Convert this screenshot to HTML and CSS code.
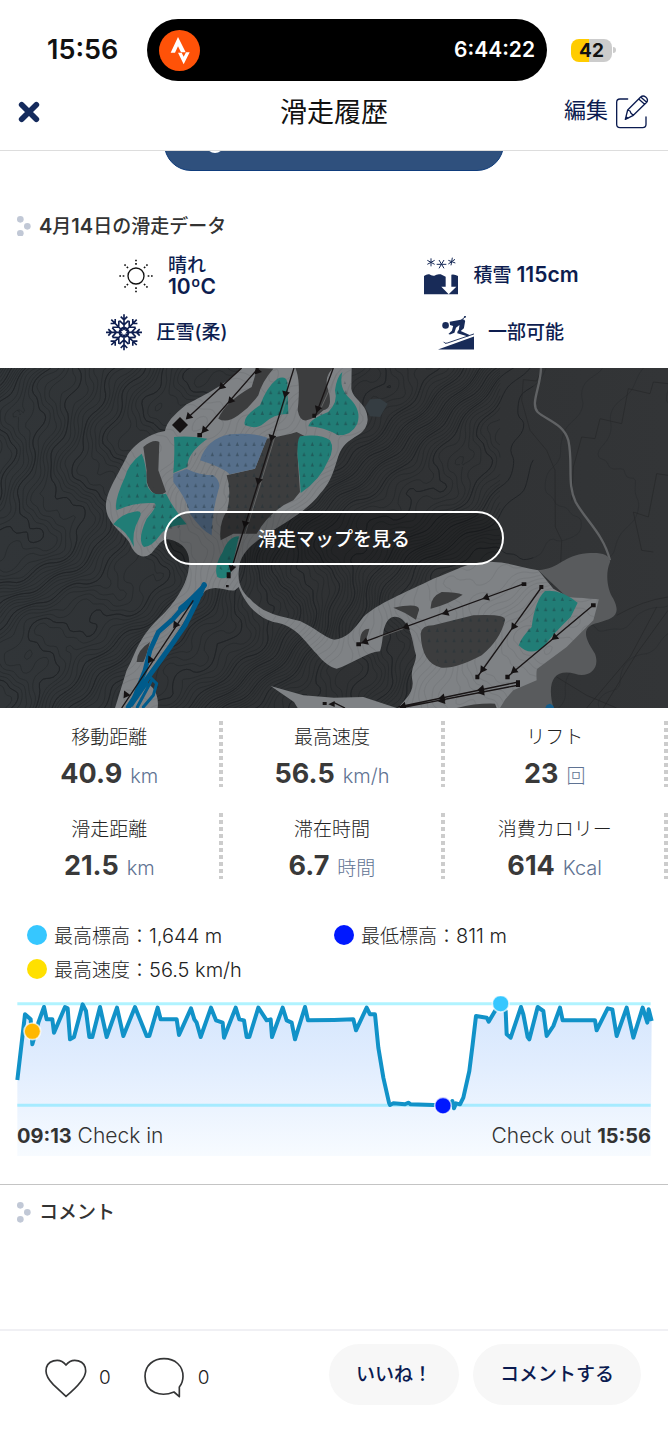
FILE: index.html
```html
<!DOCTYPE html>
<html lang="ja">
<head>
<meta charset="utf-8">
<meta name="viewport" content="width=device-width, initial-scale=1">
<title>滑走履歴</title>
<link rel="stylesheet" href="styles.css">
</head>
<body>
<div class="status">
  <span class="clock">15:56</span>
  <div class="island">
    <svg class="strava" viewBox="0 0 123 123"><circle cx="61.500" cy="61.500" r="61.500" fill="#ff5208"/><path d="M35 68 57 21 80 67H66L57 49 48 68Z" fill="#fff"/><path d="M57 68H68L74 80 81 67H92L74 103Z" fill="#fff"/></svg>
    <span class="timer">6:44:22</span>
  </div>
  <div class="battery"><span class="level">42</span><i class="nub"></i></div>
</div>
<header class="bar">
  <button class="plain close" aria-label="×"><svg viewBox="0 0 66 66"><path d="M11 11 55 55M55 11 11 55" stroke="#142a5c" stroke-width="17" stroke-linecap="round"/></svg></button>
  <h1>滑走履歴</h1>
  <button class="plain edit"><span>編集</span>
    <svg viewBox="840 280 108 108" fill="none" stroke="#0b1b50" stroke-width="4" stroke-linejoin="round" stroke-linecap="round"><path d="M881 295H858Q848 295 848 305V371Q848 381 858 381H926Q936 381 936 371V349"/><path d="M874 356 881 328 920 289Q927 283 935 289 944 297 938 305L898 344ZM881 328 888 331 891 338 898 344M914 295 932 311M920 289 938 305M876 348 882 353"/></svg>
  </button>
</header>
<main>
  <div class="peek"><button class="pill-top"><svg viewBox="0 0 12 12" aria-hidden="true"><circle cx="6" cy="6" r="6" fill="#fff"/></svg></button></div>

  <section class="data">
    <h2><svg class="dots" viewBox="0 0 42 62"><g fill="#c1c8d6"><circle cx="10" cy="10" r="10"/><circle cx="31" cy="31" r="10"/><circle cx="10" cy="52" r="10"/></g></svg><span><span class="latin">4</span>月<span class="latin">14</span>日の滑走データ</span></h2>
    <div class="conditions">
      <div class="condition">
        <svg viewBox="352 170 108 108" fill="none" stroke="#111" stroke-width="4"><circle cx="406" cy="224" r="24"/><g stroke-width="5" stroke-dasharray="5 5"><path d="M406 190V174M406 258V276M371 224H354M441 224H459M382 200 369 187M430 200 443 187M382 248 369 261M430 248 443 261"/></g></svg>
        <div class="lines"><span>晴れ</span><span class="latin">10ºC</span></div>
      </div>
      <div class="condition">
        <svg viewBox="264 158 108 114"><path d="M267 215Q276 208 283 210 289 215 298 214 306 208 317 210L332 217V247H319L341 270 364 247H349V211Q359 209 369 215V270H267Z" fill="#182b58"/><g stroke="#182b58" stroke-width="3"><path d="M288 162V186M277 168 299 180M299 168 277 180M312 167 327 192M327 167 312 192M305 180H334M352 160 348 183M340 168 361 176M360 165 340 179"/></g></svg>
        <span>積雪 <span class="latin">115cm</span></span>
      </div>
      <div class="condition">
        <svg viewBox="-55 -56 110 112" fill="none" stroke="#0d1d4f" stroke-width="5"><defs><path id="arm" d="M0-12V-55M-10-48 0-38 10-48M-14-36 0-23 14-36M-6-15 0-9 6-15"/></defs><use href="#arm"/><use href="#arm" transform="rotate(45)"/><use href="#arm" transform="rotate(90)"/><use href="#arm" transform="rotate(135)"/><use href="#arm" transform="rotate(180)"/><use href="#arm" transform="rotate(225)"/><use href="#arm" transform="rotate(270)"/><use href="#arm" transform="rotate(315)"/></svg>
        <span>圧雪(柔)</span>
      </div>
      <div class="condition">
        <svg viewBox="309 338 114 112"><g fill="#182b58"><circle cx="333" cy="371" r="10.500"/><path d="M346 359 381 353Q392 349 395 357L391 380 381 389 409 401 404 406 370 396Q369 390 375 385L377 370 366 378 361 394 347 400 342 398 353 388 357 373 347 370Z"/><path d="M309 447 423 406V447Z"/></g><path d="M381 356 397 342M327 423Q330 430 338 427L423 398" fill="none" stroke="#182b58" stroke-width="3"/><circle cx="394" cy="344" r="3" fill="#182b58"/></svg>
        <span>一部可能</span>
      </div>
    </div>
  </section>

  <section class="map">
    <svg class="terrain" viewBox="0 3 2004 1020" preserveAspectRatio="xMidYMid slice" aria-hidden="true">
      <defs>
        <pattern id="trees" width="25" height="31" patternUnits="userSpaceOnUse"><path d="M12 8 17 20H7Z" fill="#1b2e35" opacity=".4"/></pattern>
        <path id="tip" d="M-12-9H12L0 11Z"/>
        <linearGradient id="ground" x2="1"><stop offset="0" stop-color="#313538"/><stop offset=".5" stop-color="#2f3133"/><stop offset="1" stop-color="#333537"/></linearGradient>
      </defs>
      <path fill="url(#ground)" d="M0 0H2004V1023H0Z"/>
      <g id="contours" fill="none" stroke="#212427"></g>
      <path d="M1095 120 1110 97 1140 95 1163 110 1140 150 1110 148Z" fill="#353d42"/>
      <g fill="none" stroke="#252729" stroke-width="2"><path d="M1620 20 1610 42 1570 38 1565 100 1590 190 1640 250 1665 310 1666 480 1685 520 1682 590"/><path d="M2004 50 1960 45 1950 80 1885 65 1865 170 1800 155 1785 215 1745 210 1720 300 1715 400M2004 325 1970 320 1945 450 1900 435 1925 550 1960 555"/><path d="M1670 930 1760 985 1850 1023M1850 745Q1930 700 2004 690M1760 1023 1890 870 1970 720M1810 1023 1910 860 2004 730"/></g>
      <path d="M1623 3C1622 60 1590 110 1613 135 1640 160 1690 170 1705 220 1720 290 1700 350 1727 405 1757 460 1810 500 1830 580" fill="none" stroke="#606264" stroke-width="7"/>
      <path d="M1615 610C1680 605 1690 565 1760 559 1800 555 1832 562 1830 585 1815 620 1822 670 1840 695 1865 745 1840 755 1795 767 1735 780 1760 820 1785 860 1803 910 1760 935 1725 920 1665 905 1645 940 1655 1000L1660 1023H1490L1600 900 1780 750 1797 697 1700 690Z" fill="#595b5d"/>
      <path id="piste" fill="#7f8285" d="M725 3C670 60 600 90 560 112 520 145 500 165 495 192 440 200 390 245 380 270 345 340 315 380 318 425 325 480 385 505 392 535 405 565 430 580 455 558 475 535 485 515 505 517 545 525 575 550 566 605 560 660 510 725 475 755 410 820 405 865 380 910L345 1023H473C478 985 460 955 440 950L505 840 580 720 615 672C650 650 680 675 705 670L716 660C735 710 770 750 820 765 890 775 910 820 950 860 970 885 990 900 1010 905 1050 895 1100 855 1140 853 1148 830 1148 800 1152 785 1165 740 1190 745 1208 758 1235 780 1238 830 1248 865 1248 890 1230 905 1237 940 1245 980 1205 1005 1195 1023H1500L1515 998 1540 970 1610 940Q1608 910 1612 905L1700 840 1780 760 1797 697Q1750 693 1705 690L1660 665 1615 610C1560 600 1520 585 1480 585 1410 580 1370 610 1300 635 1220 675 1130 710 1090 750 1060 790 1040 815 1002 818 970 810 950 785 900 762 830 745 790 740 750 695 730 680 710 650 717 605 720 560 755 530 810 495 880 455 930 420 960 380 1000 340 1005 290 1020 255 1050 200 1095 215 1103 160 1105 110 1060 100 1054 65L1055 3Z"/>
      <path d="M812 957 910 985 1002 992 1090 990 1190 1023H893L882 1005Z" fill="#7f8285"/>
      <g id="slopelines" fill="none" stroke="#696c6f" stroke-width="2" opacity=".5"></g>
      <g fill="#3c3d3e">
        <path d="M772 3 755 60Q675 105 655 155 680 170 715 145 750 120 775 85 785 45 820 5Z"/>
        <path d="M886 3Q903 40 893 130 900 165 920 160 945 155 970 130 1000 125 985 70 970 30 1000 3Z"/>
        <path d="M430 240Q460 215 478 225L475 310 498 375Q470 395 452 370 435 350 440 310Z"/>
        <path d="M800 215Q860 205 890 195L915 208Q890 225 893 270L900 375 880 400Q810 430 770 500L700 500Q680 510 662 520 655 470 682 430 695 370 680 325L765 305Z"/>
        <path d="M1262 800Q1265 775 1300 775L1420 745Q1520 740 1515 760 1500 820 1445 865 1370 905 1325 902 1265 890 1262 800Z"/>
        <path d="M1180 722Q1270 705 1255 735L1248 758Q1215 735 1180 722ZM1292 725Q1290 690 1325 675 1370 675 1388 683 1350 710 1292 725ZM1080 825Q1080 785 1108 785 1105 800 1095 825ZM410 885Q410 850 450 825 440 865 430 885ZM1370 1023Q1430 1008 1485 1010L1490 1023Z"/>
      </g>
      <g fill="#217d76">
        <path d="M522 210Q565 205 622 215 560 260 562 300L520 318Q525 250 522 210Z"/>
        <path d="M425 260Q440 290 440 350 450 390 498 380 520 425 560 472 500 475 480 505 455 540 432 540 410 520 440 455 480 410 460 408 400 405 350 430 340 405 375 330 385 290 425 260Z"/>
        <path d="M400 435Q435 425 415 460 395 495 402 540 380 490 340 472 365 440 400 435Z"/>
        <path d="M832 35Q857 25 862 45L865 140Q820 140 790 170 770 188 735 175 725 150 780 115 800 60 832 35Z"/>
        <path d="M900 208Q965 200 990 220 1005 245 985 280 960 340 902 378 900 330 893 270 890 220 900 208Z"/>
        <path d="M1027 15Q1015 65 1050 95 1085 130 1072 170 1055 205 1015 205 970 180 925 178 930 155 985 135 1015 105 1005 70 1010 30 1027 15Z"/>
        <path d="M717 508Q685 508 668 555 640 600 652 630 670 640 690 625Z"/>
        <path d="M1635 672Q1680 665 1733 707L1712 750Q1660 800 1630 840 1590 870 1556 835 1565 810 1595 780 1605 700 1635 672Z"/>
      </g>
      <path d="M600 280Q620 215 690 202 750 195 802 212L765 305 690 322Q665 300 600 280ZM520 320 560 306Q600 325 640 325 665 345 655 370 635 440 635 505 605 490 570 440 560 395 520 345Z" fill="#566f8b"/>
      <g fill="url(#trees)"><path d="M522 210H622L562 300 522 310ZM425 260 440 350 498 380 560 472 480 505 432 540 460 408 350 420ZM832 35 862 45 865 140 735 175ZM600 280 690 202 802 212 765 305 690 322ZM802 215H900L890 380 770 490 662 510 690 322 765 305ZM900 208 990 220 985 280 902 378ZM520 320 560 306 640 325 655 370 635 505 570 440ZM1027 15 1050 95 1072 170 1015 205 925 178 1005 100ZM717 508 652 600 690 625ZM1635 672 1733 707 1630 840 1556 835ZM1262 800 1300 775 1420 745 1515 760 1445 865 1325 902Z"/></g>
      <g fill="none" stroke="#005b8b" stroke-linecap="round" stroke-linejoin="round"><path d="M612 653 590 705 555 775 510 840 445 930 385 1020" stroke-width="15"/><path d="M614 655 560 710 520 755 475 795 450 850 435 910 400 1000" stroke-width="14"/><path d="M600 680 545 725" stroke-width="20"/><path d="M450 930 470 950 460 985 430 1020M440 950 395 1015M455 940 412 1020" stroke-width="9"/></g>
      <path d="M1636 1023 1640 1014 1650 1010 1660 1016 1662 1023Z" fill="#145d8b"/>
      <g fill="none" stroke="#191516" stroke-width="4"><path d="M725 3 560 155M775 3 605 198M882 3 693 610M1000 3 947 145M580 700 365 1023M1573 650 1078 830M1625 660 1432 930M1780 714 1522 930M1555 945 1195 1020M1558 954 1200 1023M1002 1007 1035 1023"/></g>
      <path d="M865 60 700 600M1005 20 955 130M1210 783 1130 812" stroke="#777" stroke-width="2" transform="translate(5 0)"/>
      <g fill="#151213">
        <use href="#tip" transform="translate(664 60) rotate(45)"/><use href="#tip" transform="translate(565 150) rotate(45)"/><use href="#tip" transform="translate(771 14) rotate(40)"/><use href="#tip" transform="translate(691 102) rotate(40)"/><use href="#tip" transform="translate(612 190) rotate(40)"/><use href="#tip" transform="translate(856 82) rotate(15)"/><use href="#tip" transform="translate(815 213) rotate(15)"/><use href="#tip" transform="translate(775 343) rotate(15)"/><use href="#tip" transform="translate(735 472) rotate(15)"/><use href="#tip" transform="translate(695 605) rotate(15)"/><use href="#tip" transform="translate(953 127) rotate(20)"/><use href="#tip" transform="translate(526 775) rotate(35)"/><use href="#tip" transform="translate(450 880) rotate(35)"/><use href="#tip" transform="translate(377 985) rotate(35)"/>
        <use href="#tip" transform="translate(1457 692) rotate(70)"/><use href="#tip" transform="translate(1336 738) rotate(70)"/><use href="#tip" transform="translate(1217 780) rotate(70)"/><use href="#tip" transform="translate(1094 825) rotate(70)"/><use href="#tip" transform="translate(1540 780) rotate(35)"/><use href="#tip" transform="translate(1447 909) rotate(35)"/><use href="#tip" transform="translate(1663 812) rotate(50)"/><use href="#tip" transform="translate(1541 912) rotate(50)"/><use href="#tip" transform="translate(1443 967) rotate(78)"/><use href="#tip" transform="translate(1443 976) rotate(78)"/><use href="#tip" transform="translate(1325 993) rotate(78)"/><use href="#tip" transform="translate(1325 1001) rotate(78)"/><use href="#tip" transform="translate(1208 1018) rotate(78)"/>
        <path d="M540 150 564 174 540 198 516 174ZM592 198H606V211H592ZM680 616H692V634H680ZM678 654H686V661H678ZM937 140H948V152H937ZM1565 646H1579V657H1565ZM1618 654H1630V666H1618ZM1773 709H1787V721H1773ZM1069 826H1083V838H1069ZM1426 923H1438V937H1426ZM1516 923H1529V937H1516ZM1548 940H1560V960H1548ZM968 1005H980V1014H968ZM985 1012 1004 1002V1020Z"/>
      </g>
    </svg>
    <button class="map-link">滑走マップを見る</button>
  </section>

  <dl class="stats">
    <div><dt>移動距離</dt><dd><b>40.9</b><span class="latin">km</span></dd></div>
    <div><dt>最高速度</dt><dd><b>56.5</b><span class="latin">km/h</span></dd></div>
    <div><dt>リフト</dt><dd><b>23</b><span>回</span></dd></div>
    <div><dt>滑走距離</dt><dd><b>21.5</b><span class="latin">km</span></dd></div>
    <div><dt>滞在時間</dt><dd><b>6.7</b><span>時間</span></dd></div>
    <div><dt>消費カロリー</dt><dd><b>614</b><span class="latin">Kcal</span></dd></div>
  </dl>

  <ul class="legend">
    <li><i class="dot sky"></i><span>最高標高：<span class="latin">1,644 m</span></span></li>
    <li><i class="dot blue"></i><span>最低標高：<span class="latin">811 m</span></span></li>
    <li><i class="dot yellow"></i><span>最高速度：<span class="latin">56.5 km/h</span></span></li>
  </ul>

  <section class="chart">
    <svg class="profile" viewBox="0 255 2004 480" aria-hidden="true">
      <defs><linearGradient id="sky" gradientUnits="userSpaceOnUse" x1="0" y1="278" x2="0" y2="735"><stop offset="0" stop-color="#d5e6fd"/><stop offset=".4" stop-color="#e1edfe"/><stop offset="1" stop-color="#f7fbff"/></linearGradient></defs>
      <path id="fill" fill="url(#sky)"/>
      <path d="M52 278H1952" stroke="#b0f3ff" stroke-width="9"/><path d="M52 583H1952" stroke="#a6ebff" stroke-width="9"/>
      <path id="line" fill="none" stroke="#1192c8" stroke-width="12" stroke-linejoin="round"/>
      <g stroke="#fff" stroke-opacity=".7" stroke-width="5"><circle cx="97" cy="361" r="25" fill="#ffb700"/><circle cx="1329" cy="584" r="25" fill="#0018ff"/><circle cx="1502" cy="278" r="25" fill="#36c7ff"/></g>
    </svg>
    <div class="times"><span><b>09:13</b> Check in</span><span>Check out <b>15:56</b></span></div>
  </section>

  <section class="comments">
    <h2><svg class="dots" viewBox="0 0 42 62"><g fill="#c1c8d6"><circle cx="10" cy="10" r="10"/><circle cx="31" cy="31" r="10"/><circle cx="10" cy="52" r="10"/></g></svg><span>コメント</span></h2>
  </section>
</main>
<footer class="actions">
  <div class="counts">
    <span class="count"><svg viewBox="132 564 129 126" fill="none" stroke="#343536" stroke-width="5"><path d="M198 682Q178 664 160 647 138 624 138 606C138 574 178 563 198 588 218 563 257 574 257 606 257 630 222 662 198 682Z"/></svg>0</span>
    <span class="count"><svg viewBox="432 564 129 126" fill="none" stroke="#343536" stroke-width="5" stroke-linejoin="round"><path d="M541 683 525 669C488 684 438 674 438 622 438 588 464 569 495 569 528 569 552 590 552 622 552 635 548 646 541 654Z"/></svg>0</span>
  </div>
  <button class="pill">いいね！</button>
  <button class="pill">コメントする</button>
</footer>
<script src="app.js"></script>
</body>
</html>
```
FILE: styles.css
```css
* { box-sizing: border-box; }
body {
  margin: 0;
  min-height: 100vh;
  display: flex;
  flex-direction: column;
  background: #fff;
  color: #333;
  font: 300 19px/24px Inter, "Noto Sans CJK JP", sans-serif;
}
h1, h2, dl, dd, ul { margin: 0; padding: 0; }
svg { display: block; flex: none; }
button { font: inherit; cursor: pointer; }
main { flex: 1; display: flex; flex-direction: column; }
.latin { font-size: 20px; }

.status {
  display: grid;
  grid-template-columns: 147fr 400px 121fr;
  align-items: center;
  padding-top: 19px;
}
.clock { padding-left: 47px; font-size: 27px; font-weight: 600; color: #111; }
.island {
  height: 62px;
  display: flex;
  align-items: center;
  justify-content: space-between;
  padding: 0 12px;
  border-radius: 31px;
  background: #000;
  color: #fff;
}
.strava { width: 41px; }
.timer { font-size: 21px; font-weight: 600; }
.battery { display: flex; align-items: center; gap: 1px; padding-left: 24px; }
.level {
  width: 41px;
  border-radius: 8px;
  background: linear-gradient(90deg, #fc0 44%, #ccc 44%);
  color: #111;
  font-size: 19px;
  font-weight: 700;
  line-height: 23px;
  text-align: center;
}
.nub { width: 3px; height: 6px; border-radius: 0 3px 3px 0; background: #ccc; }

.bar {
  display: grid;
  grid-template-columns: 1fr auto 1fr;
  align-items: center;
  height: 70px;
  padding: 0 18px 8px;
  border-bottom: 1px solid #ddd;
}
.bar h1 { padding-top: 2px; font-size: 27px; font-weight: 400; line-height: 32px; color: #111; }
.plain { padding: 0; border: 0; background: none; color: #0b1b50; }
.close svg { width: 22px; }
.close { justify-self: start; }
.edit { justify-self: end; display: flex; align-items: center; gap: 6px; font-size: 22px; font-weight: 400; }
.edit span { padding-bottom: 3px; }
.edit svg { width: 36px; }

.peek { height: 20px; display: flex; align-items: flex-end; justify-content: center; overflow: hidden; }
.pill-top {
  flex: none;
  width: 340px;
  height: 54px;
  padding: 0 41px;
  border: 1px solid #0f3c7c;
  border-radius: 27px;
  background: #2f507d;
}
.pill-top svg { width: 18px; }

h2 { display: flex; align-items: center; gap: 8px; padding-left: 17px; font-size: 19px; font-weight: 500; line-height: 28px; }
h2 span { padding-top: 1px; }
h2 .latin { font-weight: 600; }
.dots { width: 14px; }
.data { padding-top: 40px; }
.conditions { display: grid; grid-template-columns: 1fr 1fr; padding: 6px 0 7px; }
.condition {
  height: 57px;
  display: flex;
  align-items: center;
  justify-content: center;
  gap: 14px;
  color: #0d1d4f;
  font-weight: 500;
}
.condition svg { width: 36px; }
.condition .latin { font-size: 21px; font-weight: 600; }
.lines { display: grid; line-height: 21px; }

.map { height: 340px; display: grid; place-items: center; overflow: hidden; background: #303336; }
.map > * { grid-area: 1 / 1; }
.terrain { width: 100%; height: 340px; }
.map-link {
  z-index: 1;
  width: 340px;
  height: 54px;
  padding: 4px 0 0;
  border: 2px solid #fff;
  border-radius: 27px;
  background: rgb(0 0 0 / 25%);
  color: #fff;
  font-weight: 500;
}

.stats { display: grid; grid-template-columns: repeat(3, 1fr); row-gap: 26px; padding-top: 13px; text-align: center; }
.stats div {
  height: 66px;
  padding: 5px 4px 0 0;
  background: repeating-linear-gradient(#ccc 0 4px, transparent 4px 7px) right / 4px 100% no-repeat;
}
.stats dt { color: #222; }
.stats dd { display: flex; justify-content: center; align-items: baseline; gap: 8px; margin-top: 8px; color: #5f7393; line-height: 32px; }
.stats b { color: #393939; font-size: 27px; font-weight: 700; }

.legend { display: grid; grid-template-columns: 1fr 1fr; row-gap: 10px; padding: 44px 27px 0; list-style: none; color: #222; }
.legend li { display: flex; align-items: center; gap: 7px; height: 24px; }
.legend li > span { padding-top: 2px; }
.dot { width: 20px; height: 20px; border-radius: 50%; }
.sky { background: #36c7ff; }
.blue { background: #0018ff; }
.yellow { background: #ffe000; }

.chart { display: grid; margin-top: 15px; }
.chart > * { grid-area: 1 / 1; }
.profile { width: 100%; }
.times { align-self: end; display: flex; justify-content: space-between; padding: 0 17px 8px; font-size: 21px; }
.times b { font-size: 20px; font-weight: 700; }

.comments { flex: 1; margin-top: 28px; padding-top: 13px; border-top: 1px solid #c4c4c4; }

.actions {
  display: flex;
  gap: 14px;
  height: 119px;
  padding: 13px 27px 0 44px;
  border-top: 2px solid #f0f0f4;
}
.counts { flex: 1; display: flex; gap: 32px; padding-top: 13px; }
.count { display: flex; align-items: center; gap: 12px; height: 42px; color: #222; }
.count svg { width: 43px; }
.pill {
  height: 61px;
  padding: 0 27px;
  border: 0;
  border-radius: 31px;
  background: #f7f7f7;
  color: #0b1b50;
  font-weight: 500;
}
```
FILE: app.js
```js
// Elevation profile
const profile = "52,507 75,310 92,325 97,400 115,335 132,288 140,325 157,325 162,365 195,288 203,292 210,385 222,378 248,280 258,300 268,378 277,378 300,288 320,378 351,290 370,375 405,288 440,375 448,375 473,290 482,325 530,325 537,372 573,292 583,325 590,335 602,378 633,290 648,328 668,335 672,380 707,290 718,325 732,328 740,378 748,378 775,290 800,328 812,325 816,378 848,290 860,328 875,335 885,385 915,288 924,328 1002,327 1060,325 1068,358 1100,290 1110,310 1125,310 1135,410 1150,500 1167,575 1170,582 1180,577 1215,580 1225,575 1232,580 1300,582 1350,582 1357,570 1362,592 1368,577 1380,580 1390,560 1408,480 1418,400 1428,315 1460,320 1466,332 1485,300 1500,285 1517,300 1520,370 1532,380 1563,288 1570,310 1583,378 1588,385 1613,288 1630,300 1640,375 1660,345 1680,290 1688,328 1785,328 1790,358 1823,292 1837,295 1850,375 1880,290 1900,380 1928,290 1942,335 1946,295 1955,330";
document.getElementById("line").setAttribute("d", "M" + profile);
document.getElementById("fill").setAttribute("d", "M" + profile + " 1952,735 52,735Z");

// Contour lines of a rolling height field, traced by marching squares
const height = (x, y) =>
  x / 75 + y / 130 +
  2.2 * Math.sin(x / 260 + Math.sin(y / 190)) * Math.cos(y / 210) +
  0.6 * Math.sin(x / 80 + y / 60) +
  0.22 * Math.sin(x / 37 - y / 29) +
  0.07 * Math.sin(x / 11 + y / 13);

function contours(x0, x1, step, gap) {
  let d = "";
  for (let y = 0; y < 1023; y += step) {
    for (let x = x0; x < x1; x += step) {
      const c = [[x, y], [x + step, y], [x + step, y + step], [x, y + step]];
      const h = c.map(p => height(p[0], p[1]) / gap);
      const lo = Math.ceil(Math.min(...h)), hi = Math.floor(Math.max(...h));
      for (let level = lo; level <= hi; level++) {
        const pts = [];
        for (let i = 0; i < 4; i++) {
          const j = (i + 1) % 4;
          if ((h[i] < level) !== (h[j] < level)) {
            const t = (level - h[i]) / (h[j] - h[i]);
            pts.push((c[i][0] + t * (c[j][0] - c[i][0])).toFixed(1) + " " + (c[i][1] + t * (c[j][1] - c[i][1])).toFixed(1));
          }
        }
        if (pts.length > 1) d += "M" + pts[0] + "L" + pts[1];
      }
    }
  }
  return d;
}

function addPath(id, d, width, clip) {
  const path = document.createElementNS("http://www.w3.org/2000/svg", "path");
  path.setAttribute("d", d);
  path.setAttribute("stroke-width", width);
  if (clip) path.setAttribute("clip-path", clip);
  document.getElementById(id).append(path);
}
addPath("contours", contours(0, 1500, 10, 0.25), 1.5);
addPath("contours", contours(0, 1600, 10, 1.25), 3);
addPath("contours", contours(1600, 2004, 10, 2.5), 1);

const svg = document.querySelector(".terrain");
const clip = document.createElementNS("http://www.w3.org/2000/svg", "clipPath");
clip.id = "onpiste";
const shape = document.getElementById("piste").cloneNode();
shape.removeAttribute("id");
clip.append(shape);
svg.querySelector("defs").append(clip);
addPath("slopelines", contours(300, 1800, 10, 0.4), 2, "url(#onpiste)");
```
